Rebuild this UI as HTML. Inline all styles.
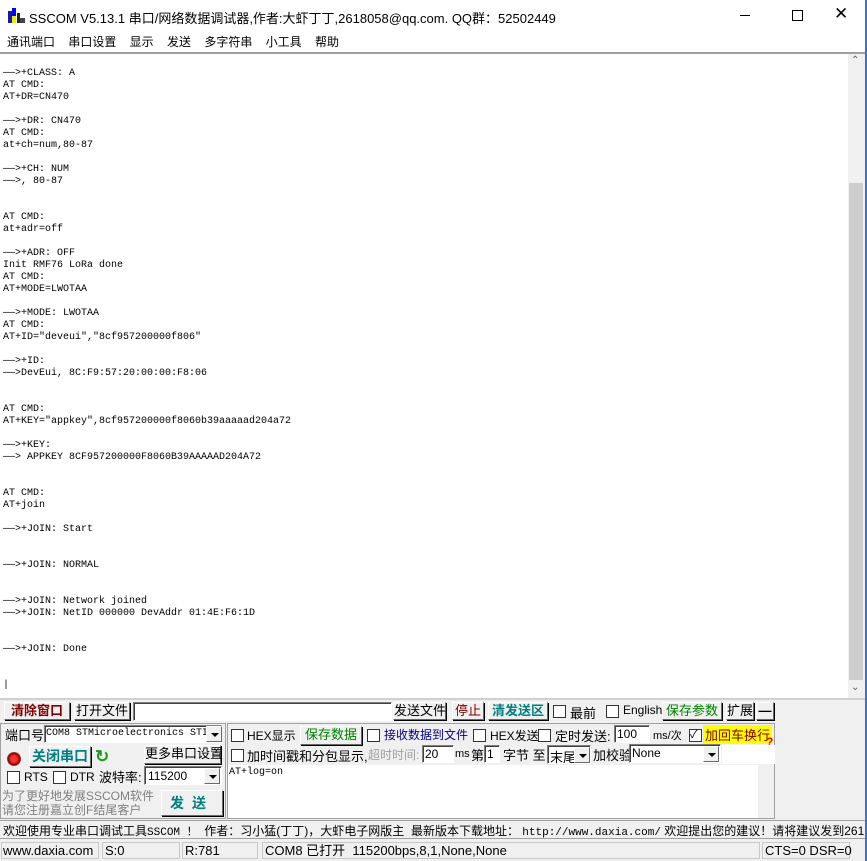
<!DOCTYPE html>
<html><head><meta charset="utf-8"><style>
*{margin:0;padding:0;box-sizing:border-box}
body{width:867px;height:861px;background:#f0f0f0;position:relative;overflow:hidden;font-family:"Liberation Sans","Noto Sans CJK SC",sans-serif;font-size:12px;color:#000}
.a{position:absolute;white-space:nowrap}
.btn{position:absolute;background:#f0f0f0;border:1px solid;border-color:#fff #696969 #696969 #fff;box-shadow:1px 1px 0 #000;text-align:center;white-space:nowrap;font-size:13px;line-height:15px}
.in{position:absolute;background:#fff;border:1px solid;border-color:#808080 #fff #fff #808080;box-shadow:inset 1px 1px 0 #404040;white-space:nowrap}
.cb{position:absolute;width:13px;height:13px;background:#fff;border:1px solid #333}
.dd{position:absolute;width:16px;height:16px;background:#f0f0f0;border:1px solid;border-color:#fff #696969 #696969 #fff}
.dd:after{content:"";position:absolute;left:4px;top:6px;border:4px solid transparent;border-top:4px solid #000}
pre{position:absolute;left:3px;top:68px;font-family:"Liberation Mono",monospace;font-size:10px;line-height:12px}
</style></head><body>
<div class="a" style="left:0;top:0;width:867px;height:32px;background:#fff"></div>
<div class="a" style="left:865px;top:0;width:2px;height:861px;background:#2b79d7"></div>
<svg class="a" style="left:8px;top:8px" width="18" height="16"><rect x="0" y="3" width="4" height="12" fill="#1a1aa0"/><rect x="4" y="0" width="4" height="15" fill="#0000ff"/><rect x="9" y="5" width="3" height="10" fill="#222"/><rect x="12" y="10" width="5" height="5" fill="#444"/><rect x="4" y="8" width="4" height="7" fill="#ee0"/></svg>
<div class="a" style="left:29px;top:8px;font-size:13px">SSCOM V5.13.1 串口/网络数据调试器,作者:大虾丁丁,2618058@qq.com. QQ群：52502449</div>
<div class="a" style="left:740px;top:15px;width:10px;height:1px;background:#000"></div>
<div class="a" style="left:792px;top:10px;width:11px;height:11px;border:1px solid #000"></div>
<div class="a" style="left:834px;top:4px;font-size:17px;font-weight:300">✕</div>
<div class="a" style="left:0;top:32px;width:865px;height:20px;background:#fff"></div>
<div class="a" style="left:7px;top:33px;font-size:12px;word-spacing:10px">通讯端口 串口设置 显示 发送 多字符串 小工具 帮助</div>
<div class="a" style="left:0;top:52px;width:865px;height:2px;background:#a0a0a0"></div>
<div class="a" style="left:0;top:54px;width:848px;height:644px;background:#fff"></div>
<pre>——>+CLASS: A
AT CMD:
AT+DR=CN470

——>+DR: CN470
AT CMD:
at+ch=num,80-87

——>+CH: NUM
——>, 80-87


AT CMD:
at+adr=off

——>+ADR: OFF
Init RMF76 LoRa done
AT CMD:
AT+MODE=LWOTAA

——>+MODE: LWOTAA
AT CMD:
AT+ID="deveui","8cf957200000f806"

——>+ID:
——>DevEui, 8C:F9:57:20:00:00:F8:06


AT CMD:
AT+KEY="appkey",8cf957200000f8060b39aaaaad204a72

——>+KEY:
——> APPKEY 8CF957200000F8060B39AAAAAD204A72


AT CMD:
AT+join

——>+JOIN: Start


——>+JOIN: NORMAL


——>+JOIN: Network joined
——>+JOIN: NetID 000000 DevAddr 01:4E:F6:1D


——>+JOIN: Done


|</pre>
<div class="a" style="left:848px;top:54px;width:16px;height:644px;background:#f0f0f0"></div>
<div class="a" style="left:849px;top:183px;width:14px;height:497px;background:#cdcdcd"></div>
<div class="a" style="left:851px;top:55px;color:#606060;font-size:10px">⌃</div>
<div class="a" style="left:851px;top:682px;color:#606060;font-size:10px">⌄</div>
<div class="a" style="left:0;top:698px;width:865px;height:2px;background:#d0d0d0"></div>
<div class="btn" style="left:4px;top:702px;width:66px;height:18px;color:#800000;font-weight:bold">清除窗口</div>
<div class="btn" style="left:74px;top:702px;width:56px;height:18px">打开文件</div>
<div class="in" style="left:133px;top:702px;width:259px;height:19px"></div>
<div class="btn" style="left:393px;top:702px;width:53px;height:18px">发送文件</div>
<div class="btn" style="left:452px;top:702px;width:32px;height:18px;color:#800000">停止</div>
<div class="btn" style="left:488px;top:702px;width:60px;height:18px;color:#008080;font-weight:bold">清发送区</div>
<div class="cb" style="left:553px;top:705px"></div><div class="a" style="left:570px;top:703px;font-size:13px">最前</div>
<div class="cb" style="left:606px;top:705px"></div><div class="a" style="left:623px;top:703px;font-size:12px">English</div>
<div class="btn" style="left:662px;top:702px;width:60px;height:18px;color:#008000">保存参数</div>
<div class="btn" style="left:726px;top:702px;width:28px;height:18px">扩展</div>
<div class="btn" style="left:756px;top:702px;width:18px;height:18px;font-weight:bold">—</div>
<div class="a" style="left:0;top:723px;width:226px;height:96px;border:1px solid #a0a0a0"></div>
<div class="a" style="left:5px;top:725px;font-size:13px">端口号</div>
<div class="in" style="left:44px;top:725px;width:178px;height:18px;font-family:'Liberation Mono',monospace;font-size:10px;padding:2px 1px;overflow:hidden">COM8 STMicroelectronics STI</div>
<div class="dd" style="left:206px;top:726px"></div>
<div class="a" style="left:7px;top:752px;width:14px;height:14px;border-radius:50%;background:radial-gradient(#ff3030 30%,#800 60%,#aaa 80%)"></div>
<div class="btn" style="left:29px;top:746px;width:62px;height:21px;color:#008080;font-weight:bold;font-size:14px;line-height:19px">关闭串口</div>
<div class="a" style="left:95px;top:747px;color:#1a9a1a;font-size:17px;font-weight:bold">↻</div>
<div class="btn" style="left:144px;top:745px;width:77px;height:19px">更多串口设置</div>
<div class="cb" style="left:7px;top:771px"></div><div class="a" style="left:24px;top:770px">RTS</div>
<div class="cb" style="left:53px;top:771px"></div><div class="a" style="left:70px;top:770px">DTR</div>
<div class="a" style="left:99px;top:767px;font-size:13px">波特率:</div>
<div class="in" style="left:144px;top:766px;width:78px;height:19px;padding:2px 3px">115200</div>
<div class="dd" style="left:204px;top:768px"></div>
<div class="a" style="left:2px;top:789px;color:#808080;font-size:12px;line-height:14px">为了更好地发展SSCOM软件<br>请您注册嘉立创F结尾客户</div>
<div class="btn" style="left:161px;top:790px;width:62px;height:26px;color:#008080;font-weight:bold;font-size:14px;line-height:24px;letter-spacing:8px">发送</div>
<div class="a" style="left:227px;top:723px;width:548px;height:96px;border:1px solid #a0a0a0"></div>
<div class="cb" style="left:231px;top:729px"></div><div class="a" style="left:247px;top:727px">HEX显示</div>
<div class="btn" style="left:300px;top:726px;width:62px;height:19px;color:#008000">保存数据</div>
<div class="cb" style="left:367px;top:729px"></div><div class="a" style="left:384px;top:726px;color:#000080">接收数据到文件</div>
<div class="cb" style="left:473px;top:729px"></div><div class="a" style="left:490px;top:727px">HEX发送</div>
<div class="cb" style="left:538px;top:729px"></div><div class="a" style="left:555px;top:726px;font-size:13px">定时发送:</div>
<div class="in" style="left:614px;top:725px;width:36px;height:18px;padding:1px 2px">100</div>
<div class="a" style="left:653px;top:727px;font-size:11px">ms/次</div>
<div class="cb" style="left:689px;top:729px;font-size:11px;line-height:11px">✓</div>
<div class="a" style="left:703px;top:725px;background:#ffff00;color:#800000;font-size:13px;padding:0 2px">加回车换行</div>
<div class="a" style="left:766px;top:735px;color:#ff0000;font-weight:bold;font-size:12px">?</div>
<div class="cb" style="left:231px;top:749px"></div><div class="a" style="left:247px;top:746px;font-size:13px">加时间戳和分包显示,</div>
<div class="a" style="left:368px;top:746px;color:#a0a0a0;font-size:12px">超时时间:</div>
<div class="in" style="left:422px;top:745px;width:32px;height:18px;padding:1px 2px">20</div>
<div class="a" style="left:455px;top:748px;font-size:11px">ms</div>
<div class="a" style="left:471px;top:745px;font-size:13px">第</div>
<div class="in" style="left:484px;top:745px;width:16px;height:18px;padding:1px 2px">1</div>
<div class="a" style="left:503px;top:745px;font-size:13px">字节 至</div>
<div class="in" style="left:547px;top:745px;width:44px;height:19px;padding:1px 2px;font-size:13px">末尾</div>
<div class="dd" style="left:574px;top:747px"></div>
<div class="a" style="left:593px;top:745px;font-size:13px">加校验</div>
<div class="in" style="left:629px;top:744px;width:92px;height:19px;padding:1px 2px">None</div>
<div class="dd" style="left:703px;top:746px"></div>
<div class="a" style="left:722px;top:745px;width:53px;height:19px;background:#fff"></div>
<div class="a" style="left:228px;top:765px;width:546px;height:53px;background:#fff"></div>
<div class="a" style="left:229px;top:767px;font-family:'Liberation Mono',monospace;font-size:10px">AT+log=on</div>
<div class="a" style="left:758px;top:765px;width:16px;height:53px;background:#f0f0f0"></div>
<div class="a" style="left:0;top:820px;width:865px;height:19px;border-top:1px solid #a0a0a0;border-bottom:1px solid #a0a0a0"></div>
<div class="a" style="left:3px;top:822px;font-size:12px">欢迎使用专业串口调试工具<span style="font-family:'Liberation Mono',monospace;font-size:11px">SSCOM ！</span>&nbsp; 作者：习小猛(丁丁)，大虾电子网版主&nbsp; 最新版本下载地址： <span style="font-family:'Liberation Mono',monospace;font-size:11px">http://www.daxia.com/</span> 欢迎提出您的建议！请将建议发到261</div>
<div class="a" style="left:0;top:841px;width:865px;height:20px;background:#f0f0f0"></div>
<div class="a" style="left:1px;top:842px;width:98px;height:17px;border:1px solid #c8c8c8;padding-left:1px;font-size:13px;line-height:15px">www.daxia.com</div>
<div class="a" style="left:102px;top:842px;width:78px;height:17px;border:1px solid #c8c8c8;padding-left:2px;font-size:13px;line-height:15px">S:0</div>
<div class="a" style="left:182px;top:842px;width:76px;height:17px;border:1px solid #c8c8c8;padding-left:2px;font-size:13px;line-height:15px">R:781</div>
<div class="a" style="left:262px;top:842px;width:498px;height:17px;border:1px solid #c8c8c8;padding-left:2px;font-size:13px;line-height:15px">COM8 已打开&nbsp; 115200bps,8,1,None,None</div>
<div class="a" style="left:762px;top:842px;width:88px;height:17px;border:1px solid #c8c8c8;padding-left:2px;font-size:13px;line-height:15px">CTS=0 DSR=0</div>
</body></html>
